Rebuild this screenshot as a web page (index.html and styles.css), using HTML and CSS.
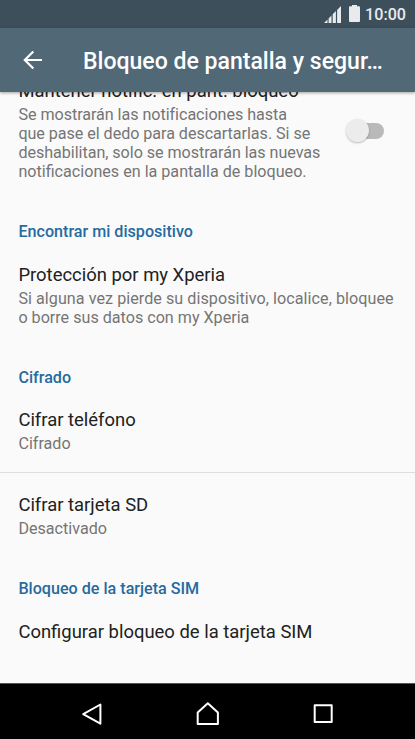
FILE: index.html
```html
<!DOCTYPE html>
<html lang="es">
<head>
<meta charset="utf-8">
<title>Bloqueo de pantalla y seguridad</title>
<link rel="stylesheet" href="styles.css">
</head>
<body>
<div class="phone">
  <div class="status">
    <svg class="signal" width="17" height="17" viewBox="0 0 17 17"><path d="M0 17L3.5 13.5V17ZM4.6 12.4L7.5 9.5V17H4.6ZM8.7 8.3L11.9 5.1V17H8.7ZM13.1 3.9L17 0V17H13.1Z"/></svg>
    <svg class="battery" width="11" height="17" viewBox="0 0 11 17"><path d="M3 0h5v1.300h2q1 0 1 1V16q0 1-1 1H1q-1 0-1-1V2.300q0-1 1-1h2z"/></svg>
    <span class="clock">10:00</span>
  </div>
  <header class="toolbar">
    <svg class="back" width="20" height="20" viewBox="0 0 20 20"><path d="M19 10H2M10.300 1.500L1.800 10l8.500 8.500"/></svg>
    <h1>Bloqueo de pantalla y segur…</h1>
  </header>
  <main>
    <div class="list">
      <div class="item with-switch">
        <div class="texts">
          <div class="title">Mantener notific. en pant. bloqueo</div>
          <div class="summary"><span class="tight">Se mostrarán las notificaciones hasta<br>que pase el dedo para descartarlas. Si se<br>deshabilitan, solo se mostrarán las nuevas</span><br>notificaciones en la pantalla de bloqueo.</div>
        </div>
        <div class="switch"><span class="thumb"></span><span class="track"></span></div>
      </div>
      <h2>Encontrar mi dispositivo</h2>
      <div class="item">
        <div class="title">Protección por my Xperia</div>
        <div class="summary"><span class="loose">Si alguna vez pierde su dispositivo, localice, bloquee</span><br>o borre sus datos con my Xperia</div>
      </div>
      <h2>Cifrado</h2>
      <div class="item">
        <div class="title">Cifrar teléfono</div>
        <div class="summary">Cifrado</div>
      </div>
      <div class="item divided">
        <div class="title">Cifrar tarjeta SD</div>
        <div class="summary">Desactivado</div>
      </div>
      <h2>Bloqueo de la tarjeta SIM</h2>
      <div class="item">
        <div class="title">Configurar bloqueo de la tarjeta SIM</div>
      </div>
    </div>
  </main>
  <nav>
    <svg width="24" height="24" viewBox="0 0 24 24"><path d="M20.400 2.500V21.700L3.200 12.100Z"/></svg>
    <svg width="24" height="24" viewBox="0 0 24 24"><path d="M1.700 22.100V10.600L11.800 1.300L21.900 10.600V22.100Z"/></svg>
    <svg width="24" height="24" viewBox="0 0 24 24"><path d="M3.700 3.300H20.700V20.100H3.700Z"/></svg>
  </nav>
</div>
</body>
</html>
```
FILE: styles.css
```css
* { box-sizing: border-box; }
body { margin: 0; font-family: Roboto, sans-serif; }
h1, h2 { margin: 0; font-weight: 500; }
.phone {
  width: 415px;
  height: 739px;
  display: flex;
  flex-direction: column;
  overflow: hidden;
  background: #fafafa;
}
.status {
  flex: none;
  height: 28px;
  display: flex;
  justify-content: flex-end;
  align-items: center;
  padding-right: 9px;
  background: #3e4f5c;
}
.status svg { fill: #e8eaec; }
.signal { margin: 1px 8px 0 0; }
.battery { margin: -1px 5px 0 0; }
.clock {
  font-size: 16.14px;
  font-weight: 500;
  line-height: 19px;
  color: #e8eaec;
  margin-top: 1px;
}
.toolbar {
  flex: none;
  height: 64px;
  display: flex;
  align-items: center;
  padding-left: 23px;
  background: #516877;
  color: #fff;
  box-shadow: 0 1px 3px rgba(0, 0, 0, .35);
  z-index: 1;
}
.back { fill: none; stroke: #fff; stroke-width: 2.2; }
.toolbar h1 {
  margin-left: 40px;
  padding-top: 3px;
  font-size: 23.06px;
  line-height: 27px;
  white-space: nowrap;
}
main { flex: 1; min-height: 0; overflow: hidden; }
/* The list is scrolled, so its first row starts under the toolbar. */
.list { margin-top: -30px; }
.item { padding: 18px 18.4px; white-space: nowrap; }
.title { font-size: 18.44px; line-height: 22px; color: #212121; }
.summary {
  margin-top: 3px;
  font-size: 16.14px;
  line-height: 19px;
  color: #757575;
}
.tight { letter-spacing: -.045px; }
.loose { letter-spacing: .05px; }
h2 {
  padding: 23px 18.4px 4.5px;
  font-size: 16.14px;
  line-height: 19px;
  color: #266a9f;
}
.divided { margin-top: 1px; border-top: 1px solid #dedede; padding-top: 21px; }
.with-switch {
  display: flex;
  align-items: center;
  justify-content: space-between;
  padding-right: 31px;
}
.switch { display: flex; align-items: center; }
.thumb {
  width: 23px;
  height: 23px;
  border-radius: 50%;
  background: #ececec;
  box-shadow: 0 1px 2px rgba(0, 0, 0, .25);
  z-index: 1;
}
.track {
  width: 26px;
  height: 16px;
  margin-left: -11px;
  border-radius: 8px;
  background: #b9b9b9;
}
nav {
  flex: none;
  height: 56px;
  display: flex;
  align-items: center;
  justify-content: space-between;
  padding: 4px 80px 0;
  border-top: 1px solid #555;
  background: #000;
}
nav svg { fill: none; stroke: #fff; stroke-width: 2; stroke-linejoin: round; }
```
